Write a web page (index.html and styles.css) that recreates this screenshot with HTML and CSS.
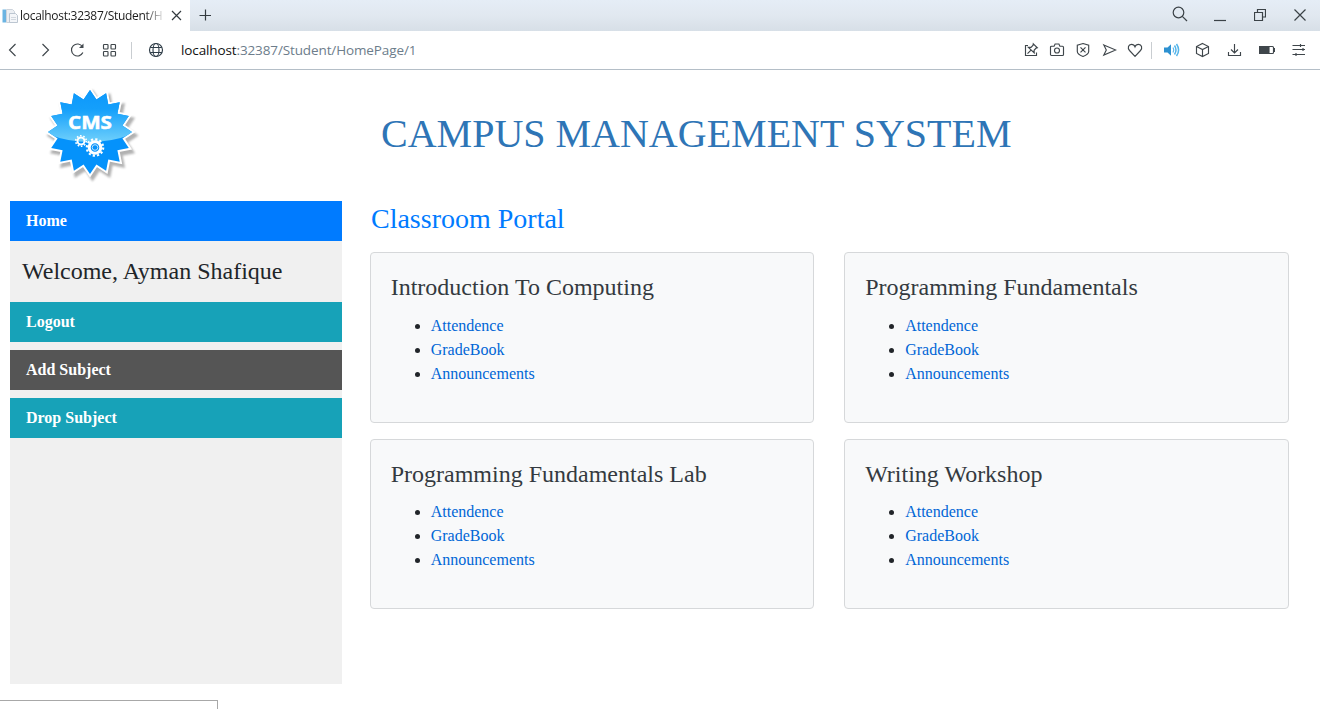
FILE: index.html
```html
<!DOCTYPE html>
<html lang="en">
<head>
<meta charset="utf-8">
<title>Campus Management System</title>
<link rel="stylesheet" href="styles.css">
</head>
<body>
<div class="window">
  <div class="tabbar">
    <div class="tab">
      <svg class="favicon" width="16" height="16" viewBox="0 0 16 16"><path d="M.5 1.500h3.500v13H.5z" fill="#6bb4e2"/><path d="M4.500 1.500h6l2 2v11h-8z" fill="#eceff3" stroke="#ccd3db"/><path d="M7.500 5.500h6l2 2v7h-8z" fill="#f4f6f9" stroke="#bcc6d1"/><path d="M9 9.500h5M9 11.500h5" stroke="#d2d8df"/></svg>
      <span class="tab-title">localhost:32387/Student/H</span>
      <svg class="tab-close" width="11" height="11" viewBox="0 0 11 11"><path d="M1 1l9 9M10 1l-9 9"/></svg>
    </div>
    <svg class="new-tab" width="12" height="12" viewBox="0 0 12 12"><path d="M6.500 .5v11M.5 6.500h11.500"/></svg>
    <div class="win-controls">
      <svg class="search" width="16" height="16" viewBox="0 0 16 16"><circle cx="6.500" cy="6.500" r="5.300"/><path d="M10.300 10.300l4.700 4.700"/></svg>
      <svg width="12" height="16" viewBox="0 0 12 16"><path d="M0 14.500h12"/></svg>
      <svg class="restore" width="12" height="16" viewBox="0 0 12 16"><path d="M.5 6.500h8v8h-8zM3.500 6V3.500h8v7.500H9"/></svg>
      <svg width="14" height="16" viewBox="0 0 14 16"><path d="M1.500 3.500l11 11M12.500 3.500l-11 11"/></svg>
    </div>
  </div>

  <div class="toolbar">
    <div class="nav">
      <svg width="16" height="16" viewBox="0 0 16 16"><path d="M10.500 2L4.500 8l6 6"/></svg>
      <svg width="16" height="16" viewBox="0 0 16 16"><path d="M5.500 2l6 6-6 6"/></svg>
      <svg width="16" height="16" viewBox="0 0 16 16"><path d="M13.900 10.600A6 6 0 1 1 13.500 4.700"/><path d="M14.500 1.500V6H10z" fill="#444b50" stroke="none"/></svg>
      <svg width="16" height="16" viewBox="0 0 16 16"><rect x="2.500" y="2.500" width="4.500" height="4.500" rx=".7"/><rect x="10" y="2.500" width="4.500" height="4.500" rx=".7"/><rect x="2.500" y="9.500" width="4.500" height="4.500" rx=".7"/><rect x="10" y="9.500" width="4.500" height="4.500" rx=".7"/></svg>
    </div>
    <span class="divider"></span>
    <svg class="globe" width="16" height="16" viewBox="0 0 16 16"><circle cx="8" cy="8" r="6.500"/><ellipse cx="8" cy="8" rx="3" ry="6.500"/><path d="M2.200 5.500h11.600M2.200 10.500h11.600"/></svg>
    <div class="url"><span class="host">localhost</span>:32387/Student/HomePage/1</div>
    <div class="page-actions">
      <svg width="16" height="16" viewBox="0 0 16 16"><path d="M5 3.500H2.500v10h11V10.500"/><path d="M10.300 1.800l4 4-1.200.3-2 2.200.1 2.600-5.800-5.600 2.600.1 2.100-2.200zM8 8.200l-3.500 3.500"/></svg>
      <svg width="16" height="16" viewBox="0 0 16 16"><path d="M2.500 4.200h2.600l1-2.200h3.800l1 2.200h2.600a1 1 0 0 1 1 1v7.300a1 1 0 0 1-1 1h-11a1 1 0 0 1-1-1V5.200a1 1 0 0 1 1-1z"/><circle cx="8" cy="8.500" r="2.500"/></svg>
      <svg width="16" height="16" viewBox="0 0 16 16"><path d="M8 1.500l5.700 1.700v6.300c0 2.500-3.300 4.100-5.700 5-2.400-.9-5.700-2.500-5.700-5V3.200zM5.500 5.300l5 5M10.500 5.300l-5 5"/></svg>
      <svg width="16" height="16" viewBox="0 0 16 16"><path d="M2.800 3l12 5-12 5 2.500-5z"/></svg>
      <svg width="16" height="16" viewBox="0 0 16 16"><path d="M8 14.300L2.500 8.500C.3 6 1.300 2.300 4.500 2.300 6.300 2.300 7.500 3.400 8 4.800c.5-1.400 1.700-2.500 3.500-2.500 3.200 0 4.200 3.700 2 6.200z"/></svg>
    </div>
    <span class="divider"></span>
    <div class="tools">
      <svg width="18" height="16" viewBox="0 0 18 16"><path d="M1 5.500h3.500L8 2.200v11.600L4.500 10.500H1z" fill="#2d91d1" stroke="none"/><path d="M10 5.500q1.600 2.500 0 5" stroke="#55b5ea"/><path d="M11.500 3.500q3 4.500 0 9M13.500 2q4.200 6 0 12" stroke="#55b5ea" stroke-width="1.500"/></svg>
      <svg width="16" height="16" viewBox="0 0 16 16"><path d="M7.500 1.500l6 3v7l-6 3-6-3v-7zM1.500 4.500l6 3 6-3M7.500 7.500v7"/></svg>
      <svg width="16" height="16" viewBox="0 0 16 16"><path d="M7.500 2v8.500M4 7.500L7.500 11 11 7.500M1.500 10v3.500h12V10"/></svg>
      <svg width="16" height="16" viewBox="0 0 16 16"><rect x=".5" y="4.500" width="14" height="7" rx="1"/><path d="M.5 4.500h9.500v7H.5z" fill="#3f464b"/><path d="M15.500 6v4"/></svg>
      <svg width="16" height="16" viewBox="0 0 16 16"><path d="M1.500 3.500h12.500M1.500 7.500h12.500M1.500 12.500h12.500M9.500 2v3M12 6v3M5 11v3"/></svg>
    </div>
  </div>

  <header class="banner">
    <svg class="logo" width="110" height="110" viewBox="-55 -55 110 110">
      <defs>
        <linearGradient id="shine" x1="0" y1="0" x2="0" y2="1"><stop offset="0" stop-color="#0c97fb"/><stop offset=".4" stop-color="#149ffb"/><stop offset="1" stop-color="#6fd0fb"/></linearGradient>
        <clipPath id="badge"><use href="#star"/></clipPath>
        <filter id="soft" x="-20%" y="-20%" width="140%" height="140%"><feGaussianBlur stdDeviation="1.300"/></filter>
        <polygon id="star" points="0,-42 6.400,-32.400 16.100,-38.800 18.300,-27.400 29.700,-29.700 27.400,-18.300 38.800,-16.100 32.400,-6.400 42,0 32.400,6.400 38.800,16.100 27.400,18.300 29.700,29.700 18.300,27.400 16.100,38.800 6.400,32.400 0,42 -6.400,32.400 -16.100,38.800 -18.300,27.400 -29.700,29.700 -27.400,18.300 -38.800,16.100 -32.400,6.400 -42,0 -32.400,-6.400 -38.800,-16.100 -27.400,-18.300 -29.700,-29.700 -18.300,-27.400 -16.100,-38.800 -6.400,-32.400"/>
      </defs>
      <use href="#star" transform="translate(2.500 3.500)" fill="#888" stroke="#888" stroke-width="4.500" opacity=".65" filter="url(#soft)"/>
      <use href="#star" fill="#fff" stroke="#fff" stroke-width="4"/>
      <use href="#star" fill="#0492fb"/>
      <path d="M-45-45h90V1Q0 19-45 1z" fill="url(#shine)" clip-path="url(#badge)"/>
      <text class="logo-text" x="-22" y="-3" textLength="44" lengthAdjust="spacingAndGlyphs">CMS</text>
      <g fill="none" stroke="#fff">
        <circle cx="-9" cy="9" r="3.500" stroke-width="2"/><circle cx="-9" cy="9" r="5.300" stroke-width="1.500" stroke-dasharray="1.600 1.730"/>
        <circle cx="5" cy="15.500" r="5.800" stroke-width="3"/><circle cx="5" cy="15.500" r="8.200" stroke-width="2.200" stroke-dasharray="2.200 2.090"/><circle cx="5" cy="15.500" r="2.800" stroke="#bfe4fd"/>
      </g>
    </svg>
    <h1 class="site-title">CAMPUS MANAGEMENT SYSTEM</h1>
  </header>

  <div class="content">
    <aside class="sidebar">
      <a class="item home">Home</a>
      <h4 class="welcome">Welcome, Ayman Shafique</h4>
      <a class="item">Logout</a>
      <a class="item hovered">Add Subject</a>
      <a class="item">Drop Subject</a>
    </aside>
    <main class="portal">
      <h3 class="portal-title">Classroom Portal</h3>
      <div class="cards">
        <section class="card"><h4 class="card-title">Introduction To Computing</h4><ul class="links"><li><a>Attendence</a></li><li><a>GradeBook</a></li><li><a>Announcements</a></li></ul></section>
        <section class="card"><h4 class="card-title">Programming Fundamentals</h4><ul class="links"><li><a>Attendence</a></li><li><a>GradeBook</a></li><li><a>Announcements</a></li></ul></section>
        <section class="card"><h4 class="card-title">Programming Fundamentals Lab</h4><ul class="links"><li><a>Attendence</a></li><li><a>GradeBook</a></li><li><a>Announcements</a></li></ul></section>
        <section class="card"><h4 class="card-title">Writing Workshop</h4><ul class="links"><li><a>Attendence</a></li><li><a>GradeBook</a></li><li><a>Announcements</a></li></ul></section>
      </div>
    </main>
  </div>
  <div class="status"></div>
</div>
</body>
</html>
```
FILE: styles.css
```css
* { box-sizing: border-box; }
body { margin: 0; background: #fff; color: #212529; font: 16px/24px "Liberation Serif", "Times New Roman", serif; }
h1, h3, h4 { margin: 0; font-weight: 400; line-height: 1.2; }
svg { display: block; flex: none; }
.window { height: 709px; overflow: hidden; }

.tabbar { display: flex; align-items: center; height: 31px; background: linear-gradient(#e5edf6, #e1e8f0 50%, #d7dfe7); }
.tab { display: flex; align-items: center; width: 190px; height: 31px; padding-left: 2px; background: #fff; }
.tab-title { width: 143px; margin-left: 2px; white-space: nowrap; font: 12px/18px "Open Sans", sans-serif; letter-spacing: -.28px; color: transparent; background: linear-gradient(90deg, #1b1b1b 88%, #ccc 98%); -webkit-background-clip: text; background-clip: text; }
.tab-close { margin-left: 8px; }
.tab-close, .new-tab { fill: none; stroke: #333a3f; stroke-width: 1.2; }
.new-tab { margin: -2px 0 0 9px; }
.win-controls { display: flex; align-self: flex-start; gap: 28px; margin: 6px 13px 0 auto; fill: none; stroke: #3b4247; stroke-width: 1.2; }
.search { margin-right: -2px; }
.restore { margin-right: -1px; }

.toolbar { display: flex; align-items: center; height: 39px; border-bottom: 1px solid #b4bec7; padding: 0 13px 0 5px; fill: none; stroke: #3f464b; stroke-width: 1.15; }
.nav { display: flex; gap: 16px; }
.divider { width: 1px; height: 17px; margin-left: 14px; background: #c9cdd1; }
.globe { margin-left: 16px; stroke: #2f3d48; }
.url { margin-left: 17px; font: 13.5px/20px "Open Sans", sans-serif; letter-spacing: -.12px; color: #6d7d8b; }
.host { color: #111; }
.page-actions { display: flex; gap: 10px; margin-left: auto; }
.page-actions + .divider { margin-left: 8px; }
.tools { display: flex; gap: 16px; margin-left: 11px; }
.tools svg:first-child { margin-right: -2px; }

.banner { display: flex; height: 131px; padding: 7px 0 0 35px; }
.logo-text { font: 700 18px "Open Sans", sans-serif; fill: #fff; stroke: #fff; stroke-width: .5; }
.site-title { margin: 33px 0 0 236px; font-size: 40px; color: #2e75b6; white-space: nowrap; }

.content { display: flex; padding: 0 31.4px 0 10px; }
.sidebar { width: 332px; height: 483px; background: #f0f0f0; }
.item { display: block; height: 40px; margin-bottom: 8px; padding: 8px 16px; background: #17a2b8; color: #fff; font-weight: 700; }
.home { margin: 0; background: #007bff; }
.hovered { background: #555; }
.welcome { height: 61px; padding: 16px 12px; font-size: 24px; }
.portal { flex: 1; margin-left: 27.7px; padding-top: 1px; }
.portal-title { padding-left: 1.3px; font-size: 28px; color: #007bff; }
.cards { display: grid; grid-template-columns: 1fr 1fr; gap: 15.6px 30px; margin-top: 16.6px; }
.card { padding: 20px; border: 1px solid #d6d8da; border-radius: 4px; background: #f8f9fa; }
.card-title { margin-bottom: 12px; font-size: 24px; color: #343a40; }
.links { margin: 0 0 16px; padding-left: 40px; }
.links a { color: #0066d6; }

.status { position: fixed; left: 0; top: 700px; width: 218px; height: 9px; border-top: 1px solid #a8a8a8; border-right: 1px solid #a8a8a8; background: #fff; }
```
